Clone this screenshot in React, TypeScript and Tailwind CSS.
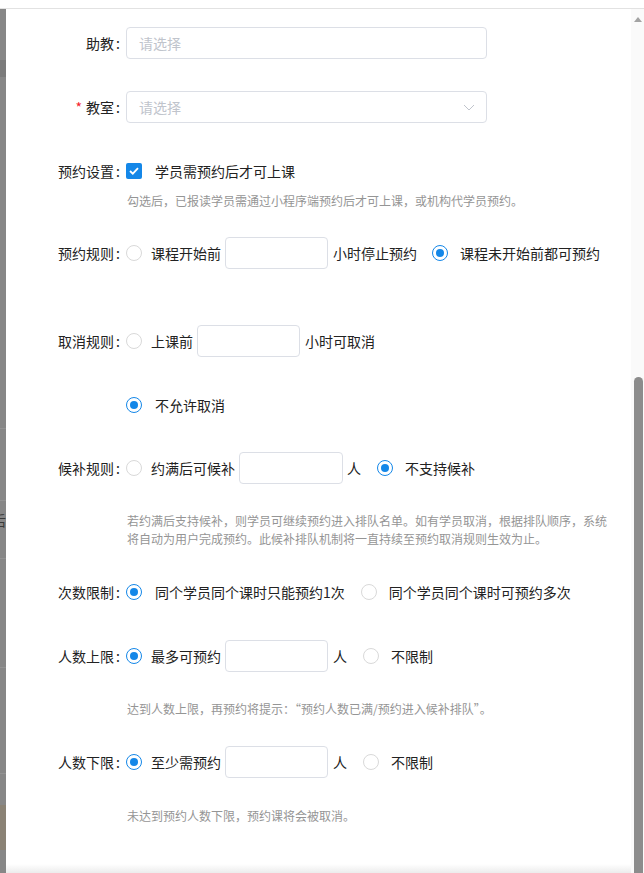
import React from "react";

function Radio({ checked }: { readonly checked?: boolean }): React.ReactElement {
  return checked ? (
    <span className="flex h-[16px] w-[16px] shrink-0 items-center justify-center rounded-full border border-[#1487e8] bg-white">
      <span className="h-[8px] w-[8px] rounded-full bg-[#1487e8]" />
    </span>
  ) : (
    <span className="h-[16px] w-[16px] shrink-0 rounded-full border border-[#d9d9d9] bg-white" />
  );
}

function Checkbox(): React.ReactElement {
  return (
    <span className="flex h-[16px] w-[16px] shrink-0 items-center justify-center rounded-[2px] bg-[#1487e8]">
      <svg width="10" height="8" viewBox="0 0 10 8" fill="none">
        <path d="M1 4l2.8 2.7L9 1.2" stroke="#fff" strokeWidth="1.8" />
      </svg>
    </span>
  );
}

function NumInput({ width }: { readonly width: string }): React.ReactElement {
  return <span className={`h-[32px] shrink-0 rounded-[4px] border border-[#dcdfe6] bg-white ${width}`} />;
}

function Row({
  label,
  required,
  className,
  children,
}: {
  readonly label?: string;
  readonly required?: boolean;
  readonly className?: string;
  readonly children: React.ReactNode;
}): React.ReactElement {
  return (
    <div className={`flex h-[32px] items-center ${className ?? ""}`}>
      <div className="w-[114px] shrink-0 text-right text-[14px] text-[#222]">
        {required && <span className="mr-[4px] text-[#f5222d]">*</span>}
        {label}
        {label && <span className="ml-[2px]">:</span>}
      </div>
      <div className="ml-[6px] flex items-center text-[14px] text-[#222]">{children}</div>
    </div>
  );
}

function Hint({ className, children }: { readonly className?: string; readonly children: React.ReactNode }): React.ReactElement {
  return (
    <p className={`ml-[121px] w-[484px] text-[12px] leading-[18px] text-[#959595] ${className ?? ""}`}>{children}</p>
  );
}

function LeftStrip(): React.ReactElement {
  return (
    <div className="flex w-[6px] shrink-0 flex-col overflow-hidden bg-[#878787]">
      <div className="h-[51px] shrink-0" />
      <div className="h-[17px] shrink-0 bg-[#7b7b7b]" />
      <div className="h-[351px] shrink-0" />
      <div className="h-px shrink-0 bg-[#939393]" />
      <div className="h-[71px] shrink-0" />
      <div className="h-px shrink-0 bg-[#939393]" />
      <div className="h-[11px] shrink-0" />
      <div className="ml-[-8px] h-[16px] shrink-0 text-[14px] leading-[16px] text-[#3a3a3a]">后</div>
      <div className="h-[30px] shrink-0" />
      <div className="h-px shrink-0 bg-[#939393]" />
      <div className="h-[108px] shrink-0" />
      <div className="h-px shrink-0 bg-[#939393]" />
      <div className="h-[105px] shrink-0" />
      <div className="h-px shrink-0 bg-[#939393]" />
      <div className="h-[31px] shrink-0" />
      <div className="h-[45px] shrink-0 bg-[#8a8275]" />
    </div>
  );
}

function Scrollbar(): React.ReactElement {
  return (
    <div className="flex w-[13px] shrink-0 flex-col items-end bg-[#fafafa] pr-px">
      <div className="flex h-[13px] w-[10px] items-end justify-center">
        <svg width="8" height="5" viewBox="0 0 8 5">
          <polygon points="4,0 8,5 0,5" fill="#a3a3a3" />
        </svg>
      </div>
      <div className="h-[355px] shrink-0" />
      <div className="w-[9px] flex-1 rounded-t-[5px] bg-[#8c8c8c]" />
    </div>
  );
}

export default function App(): React.ReactElement {
  return (
    <div className="flex h-[873px] w-[644px] flex-col overflow-hidden bg-white font-['Noto_Sans_CJK_SC','Noto_Sans',sans-serif]">
      <div className="h-[9px] shrink-0 border-b border-[#e2e2e2] bg-white" />
      <div className="flex min-h-0 flex-1">
        <LeftStrip />
        <main className="flex min-w-0 flex-1 flex-col">
          <Row label="助教" className="mt-[18px]">
            <div className="flex h-[32px] w-[361px] items-center rounded-[4px] border border-[#dcdfe6] pl-[12px] text-[#c0c4cc]">
              请选择
            </div>
          </Row>

          <Row label="教室" required className="mt-[32px]">
            <div className="flex h-[32px] w-[361px] items-center justify-between rounded-[4px] border border-[#dcdfe6] pl-[12px] pr-[11px] text-[#c0c4cc]">
              请选择
              <svg width="12" height="7" viewBox="0 0 12 7" fill="none">
                <path d="M1 1l5 5 5-5" stroke="#c0c4cc" strokeWidth="1" />
              </svg>
            </div>
          </Row>

          <Row label="预约设置" className="mt-[32px]">
            <Checkbox />
            <span className="ml-[13px]">学员需预约后才可上课</span>
          </Row>
          <Hint className="mt-[5px]">勾选后，已报读学员需通过小程序端预约后才可上课，或机构代学员预约。</Hint>

          <Row label="预约规则" className="mt-[27px]">
            <Radio />
            <span className="ml-[9px]">课程开始前</span>
            <span className="ml-[4px] flex"><NumInput width="w-[103px]" /></span>
            <span className="ml-[5px]">小时停止预约</span>
            <span className="ml-[15px] flex"><Radio checked /></span>
            <span className="ml-[12px]">课程未开始前都可预约</span>
          </Row>

          <Row label="取消规则" className="mt-[56px]">
            <Radio />
            <span className="ml-[9px]">上课前</span>
            <span className="ml-[4px] flex"><NumInput width="w-[103px]" /></span>
            <span className="ml-[5px]">小时可取消</span>
          </Row>

          <Row className="mt-[32px]">
            <Radio checked />
            <span className="ml-[13px]">不允许取消</span>
          </Row>

          <Row label="候补规则" className="mt-[31px]">
            <Radio />
            <span className="ml-[9px]">约满后可候补</span>
            <span className="ml-[4px] flex"><NumInput width="w-[104px]" /></span>
            <span className="ml-[4px]">人</span>
            <span className="ml-[16px] flex"><Radio checked /></span>
            <span className="ml-[12px]">不支持候补</span>
          </Row>
          <Hint className="mt-[28px]">
            若约满后支持候补，则学员可继续预约进入排队名单。如有学员取消，根据排队顺序，系统将自动为用户完成预约。此候补排队机制将一直持续至预约取消规则生效为止。
          </Hint>

          <Row label="次数限制" className="mt-[28px]">
            <Radio checked />
            <span className="ml-[13px]">同个学员同个课时只能预约1次</span>
            <span className="ml-[16px] flex"><Radio /></span>
            <span className="ml-[12px]">同个学员同个课时可预约多次</span>
          </Row>

          <Row label="人数上限" className="mt-[32px]">
            <Radio checked />
            <span className="ml-[9px]">最多可预约</span>
            <span className="ml-[4px] flex"><NumInput width="w-[103px]" /></span>
            <span className="ml-[5px]">人</span>
            <span className="ml-[16px] flex"><Radio /></span>
            <span className="ml-[12px]">不限制</span>
          </Row>
          <Hint className="mt-[28px]">达到人数上限，再预约将提示：“预约人数已满/预约进入候补排队”。</Hint>

          <Row label="人数下限" className="mt-[28px]">
            <Radio checked />
            <span className="ml-[9px]">至少需预约</span>
            <span className="ml-[4px] flex"><NumInput width="w-[103px]" /></span>
            <span className="ml-[5px]">人</span>
            <span className="ml-[16px] flex"><Radio /></span>
            <span className="ml-[12px]">不限制</span>
          </Row>
          <Hint className="mt-[29px]">未达到预约人数下限，预约课将会被取消。</Hint>

          <div className="flex-1" />
          <div className="h-[9px] shrink-0 bg-gradient-to-b from-white to-[#ececec]" />
        </main>
        <Scrollbar />
      </div>
    </div>
  );
}
